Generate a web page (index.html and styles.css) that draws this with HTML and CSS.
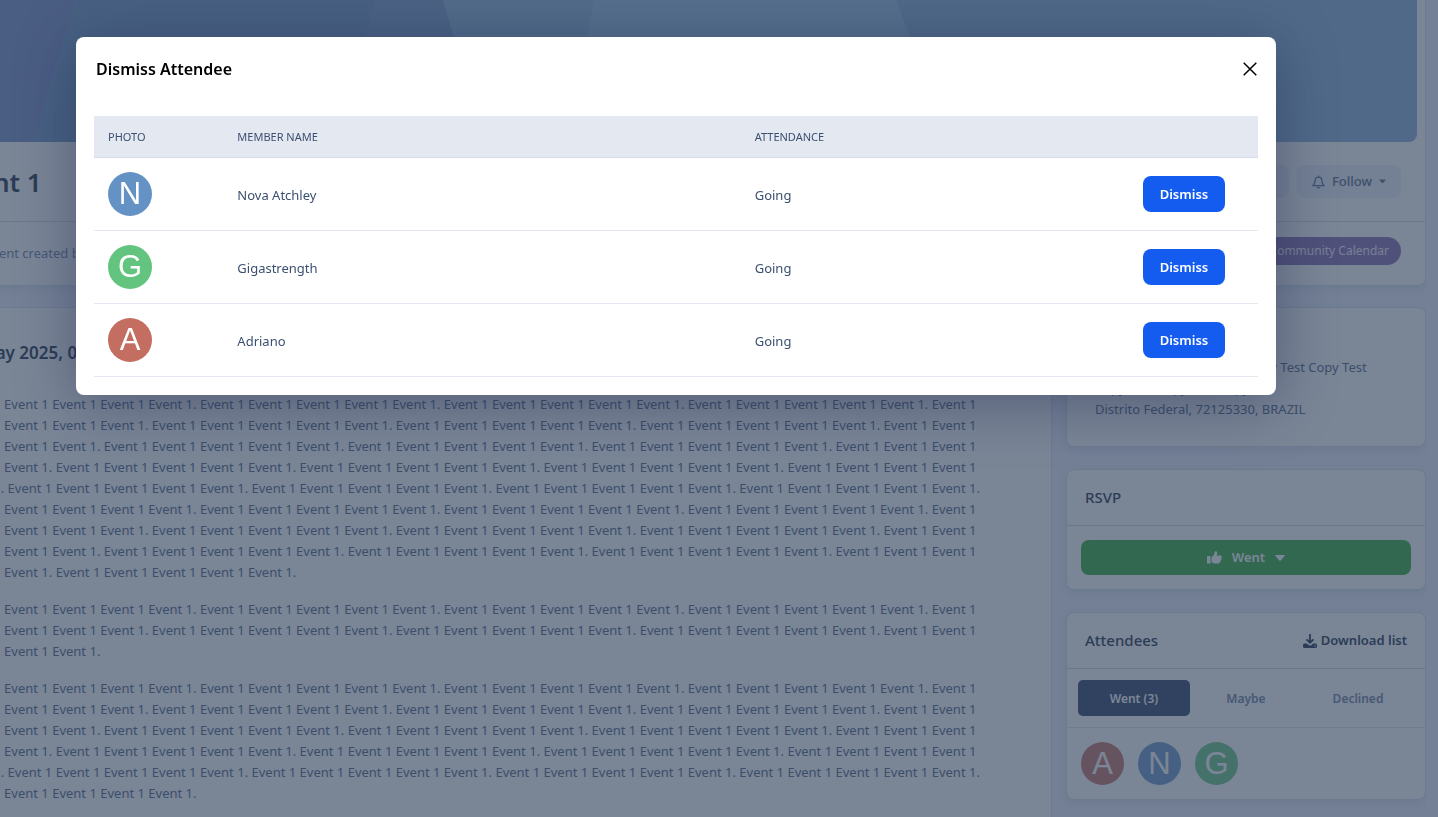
FILE: index.html
```html
<!DOCTYPE html>
<html lang="en">
<head>
<meta charset="utf-8">
<title>Event 1</title>
<link rel="stylesheet" href="styles.css">
</head>
<body>
<div class="page">
  <header class="hero">
    <div class="banner">
      <svg class="banner-art" viewBox="0 0 1474 142" preserveAspectRatio="none" aria-hidden="true">
        <path d="M0 0H133L91 142H0Z" fill="#889bcf"/>
        <path d="M133 0H432L396 142H91Z" fill="#82a5cd"/>
        <path d="M432 0H500L542 142H396Z" fill="#8ba9d2"/>
        <path d="M500 0H651L623 142H542Z" fill="#9bc0df"/>
        <path d="M651 0H953L1007 142H623Z" fill="#a4cae7"/>
      </svg>
    </div>
    <div class="hero-title">
      <h1>Event 1</h1>
      <div class="hero-actions">
        <button class="soft-btn" type="button">Share</button>
        <button class="soft-btn" type="button">
          <svg width="13" height="14" viewBox="0 0 14 15" fill="none" stroke="currentColor" stroke-width="1.4" aria-hidden="true"><path d="M7 .5V2.200M7 2.200C4.500 2.200 3.300 4 3.300 6.200C3.300 9 2.600 9.800 1.200 11.500H12.800C11.400 9.800 10.700 9 10.700 6.200C10.700 4 9.500 2.200 7 2.200ZM5.500 13C5.800 14.200 8.200 14.200 8.500 13"/></svg>
          Follow
          <svg width="7" height="5" viewBox="0 0 8 5" aria-hidden="true"><path d="M.8.3H7.200Q8 .4 7.400 1L4.500 4.300Q4 4.800 3.500 4.300L.6 1Q0 .4.8.3Z" fill="currentColor"/></svg>
        </button>
      </div>
    </div>
    <div class="hero-meta">
      <span>This event created by Gigastrength</span>
      <a class="pill" href="#">Add to Community Calendar</a>
    </div>
  </header>

  <div class="columns">
    <main class="details">
      <h2>12 May 2025, 09:00</h2>
      <p>Event 1 Event 1 Event 1 Event 1 Event 1. Event 1 Event 1 Event 1 Event 1 Event 1. Event 1 Event 1 Event 1 Event 1 Event 1. Event 1 Event 1 Event 1 Event 1 Event 1. Event 1 Event 1 Event 1 Event 1 Event 1. Event 1 Event 1 Event 1 Event 1 Event 1. Event 1 Event 1 Event 1 Event 1 Event 1. Event 1 Event 1 Event 1 Event 1 Event 1. Event 1 Event 1 Event 1 Event 1 Event 1. Event 1 Event 1 Event 1 Event 1 Event 1. Event 1 Event 1 Event 1 Event 1 Event 1. Event 1 Event 1 Event 1 Event 1 Event 1. Event 1 Event 1 Event 1 Event 1 Event 1. Event 1 Event 1 Event 1 Event 1 Event 1. Event 1 Event 1 Event 1 Event 1 Event 1. Event 1 Event 1 Event 1 Event 1 Event 1. Event 1 Event 1 Event 1 Event 1 Event 1. Event 1 Event 1 Event 1 Event 1 Event 1. Event 1 Event 1 Event 1 Event 1 Event 1. Event 1 Event 1 Event 1 Event 1 Event 1. Event 1 Event 1 Event 1 Event 1 Event 1. Event 1 Event 1 Event 1 Event 1 Event 1. Event 1 Event 1 Event 1 Event 1 Event 1. Event 1 Event 1 Event 1 Event 1 Event 1. Event 1 Event 1 Event 1 Event 1 Event 1. Event 1 Event 1 Event 1 Event 1 Event 1. Event 1 Event 1 Event 1 Event 1 Event 1. Event 1 Event 1 Event 1 Event 1 Event 1. Event 1 Event 1 Event 1 Event 1 Event 1. Event 1 Event 1 Event 1 Event 1 Event 1. Event 1 Event 1 Event 1 Event 1 Event 1. Event 1 Event 1 Event 1 Event 1 Event 1. Event 1 Event 1 Event 1 Event 1 Event 1. Event 1 Event 1 Event 1 Event 1 Event 1. Event 1 Event 1 Event 1 Event 1 Event 1.</p>
      <p>Event 1 Event 1 Event 1 Event 1 Event 1. Event 1 Event 1 Event 1 Event 1 Event 1. Event 1 Event 1 Event 1 Event 1 Event 1. Event 1 Event 1 Event 1 Event 1 Event 1. Event 1 Event 1 Event 1 Event 1 Event 1. Event 1 Event 1 Event 1 Event 1 Event 1. Event 1 Event 1 Event 1 Event 1 Event 1. Event 1 Event 1 Event 1 Event 1 Event 1. Event 1 Event 1 Event 1 Event 1 Event 1.</p>
      <p>Event 1 Event 1 Event 1 Event 1 Event 1. Event 1 Event 1 Event 1 Event 1 Event 1. Event 1 Event 1 Event 1 Event 1 Event 1. Event 1 Event 1 Event 1 Event 1 Event 1. Event 1 Event 1 Event 1 Event 1 Event 1. Event 1 Event 1 Event 1 Event 1 Event 1. Event 1 Event 1 Event 1 Event 1 Event 1. Event 1 Event 1 Event 1 Event 1 Event 1. Event 1 Event 1 Event 1 Event 1 Event 1. Event 1 Event 1 Event 1 Event 1 Event 1. Event 1 Event 1 Event 1 Event 1 Event 1. Event 1 Event 1 Event 1 Event 1 Event 1. Event 1 Event 1 Event 1 Event 1 Event 1. Event 1 Event 1 Event 1 Event 1 Event 1. Event 1 Event 1 Event 1 Event 1 Event 1. Event 1 Event 1 Event 1 Event 1 Event 1. Event 1 Event 1 Event 1 Event 1 Event 1. Event 1 Event 1 Event 1 Event 1 Event 1. Event 1 Event 1 Event 1 Event 1 Event 1. Event 1 Event 1 Event 1 Event 1 Event 1. Event 1 Event 1 Event 1 Event 1 Event 1. Event 1 Event 1 Event 1 Event 1 Event 1.</p>
    </main>

    <aside class="sidebar">
      <section class="card place">
        <h3>Location</h3>
        <address>Test Copy Test Copy Test Copy Test Copy Test<br>Copy Test Copy Test Copy<br>Distrito Federal, 72125330, BRAZIL</address>
      </section>
      <section class="card">
        <div class="card-head"><h3>RSVP</h3></div>
        <div class="rsvp">
          <button class="went-btn" type="button">
            <svg width="15" height="13" viewBox="0 0 15 13" fill="currentColor" aria-hidden="true"><path d="M.5 5H3Q3.500 5 3.500 5.500V12Q3.500 12.500 3 12.500H.5Q0 12.500 0 12V5.500Q0 5 .5 5ZM4.500 6C6.500 5 7.200 3.500 7.500 1.500C7.800-.4 10.500-.2 10.200 2.200C10.100 3.100 9.900 3.800 9.500 4.500H13.500C15 4.500 15.400 6.300 14.200 6.900C15 7.800 14.600 9 13.700 9.200C14 10.200 13.500 10.900 12.700 11C12.800 12 12.200 12.500 11.300 12.500H8.200C6.600 12.500 5.800 11.400 4.500 11.200Z"/></svg>
            Went
            <svg width="10" height="6" viewBox="0 0 10 6" fill="currentColor" aria-hidden="true"><path d="M1 0H9Q10.300.1 9.500 1L5.700 5.500Q5 6.200 4.300 5.500L.5 1Q-.3.1 1 0Z"/></svg>
          </button>
        </div>
      </section>
      <section class="card">
        <div class="card-head">
          <h3>Attendees</h3>
          <a class="download" href="#">
            <svg width="14" height="14" viewBox="0 0 14 14" aria-hidden="true"><path d="M7 0V8M3.500 5.300L7 8.700L10.500 5.300" fill="none" stroke="currentColor" stroke-width="1.800"/><path d="M1.500 9.500H3.800L5.500 10.900Q7 12 8.500 10.900L10.200 9.500H12.500Q14 9.500 14 11V12.500Q14 14 12.500 14H1.500Q0 14 0 12.500V11Q0 9.500 1.500 9.500ZM11.400 11.200V12.400H12.600V11.200Z" fill="currentColor" fill-rule="evenodd"/></svg>
            Download list
          </a>
        </div>
        <div class="tabs">
          <button class="tab tab-on" type="button">Went (3)</button>
          <button class="tab" type="button">Maybe</button>
          <button class="tab" type="button">Declined</button>
        </div>
        <div class="faces">
          <span class="avatar red">A</span>
          <span class="avatar blue">N</span>
          <span class="avatar green">G</span>
        </div>
      </section>
    </aside>
  </div>
</div>

<div class="backdrop">
  <div class="modal" role="dialog" aria-modal="true" aria-labelledby="modal-title">
    <div class="modal-head">
      <h2 id="modal-title">Dismiss Attendee</h2>
      <button class="close" type="button" aria-label="Close">
        <svg width="14" height="14" viewBox="0 0 14 14" stroke="#000" stroke-width="1.500" aria-hidden="true"><path d="M.7.7L13.300 13.300M13.300.7L.7 13.300"/></svg>
      </button>
    </div>
    <table class="members">
      <colgroup><col class="c1"><col class="c4"><col class="c3"><col class="c1"></colgroup>
      <thead><tr><th>PHOTO</th><th>MEMBER NAME</th><th>ATTENDANCE</th><td></td></tr></thead>
      <tbody>
        <tr><td><span class="avatar blue">N</span></td><td class="text">Nova Atchley</td><td class="text">Going</td><td><button class="dismiss" type="button">Dismiss</button></td></tr>
        <tr><td><span class="avatar green">G</span></td><td class="text">Gigastrength</td><td class="text">Going</td><td><button class="dismiss" type="button">Dismiss</button></td></tr>
        <tr><td><span class="avatar red">A</span></td><td class="text">Adriano</td><td class="text">Going</td><td><button class="dismiss" type="button">Dismiss</button></td></tr>
      </tbody>
    </table>
  </div>
</div>
</body>
</html>
```
FILE: styles.css
```css
* { box-sizing: border-box; }
html, body { height: 100%; }
body {
  margin: 0;
  overflow: hidden;
  background: #edf2fc;
  color: #3b5070;
  font: 13px/21px "Segoe UI", "Noto Sans", "Open Sans", sans-serif;
}
h1, h2, h3, p { margin: 0; }
h1, h2, h3 { font-weight: 600; color: #3d4a60; }
button { font: inherit; border: 0; cursor: pointer; }
a { text-decoration: none; }

/* The event page is scrolled sideways, its left edge out of view */
.page {
  height: 100%;
  margin: 0 12px 0 -66px;
  overflow: hidden;
  color: #667792;
}
.hero {
  background: #fff;
  border: 1px solid #dce2ec;
  border-top: 0;
  border-radius: 0 0 8px 8px;
  box-shadow: 0 3px 8px rgba(40, 60, 100, .08);
}
.banner {
  height: 142px;
  margin: 0 8px;
  border-radius: 0 0 8px 8px;
  overflow: hidden;
  background: #97badc;
}
.banner-art { display: block; width: 100%; height: 100%; }
.hero-title, .hero-meta {
  display: flex;
  align-items: center;
  justify-content: space-between;
  padding: 0 24px 0 14px;
}
.hero-title { height: 80px; border-bottom: 1px solid #d8dfea; }
.hero-title h1 { font-size: 26px; line-height: 32px; }
.hero-actions { display: flex; gap: 8px; }
.soft-btn {
  display: flex;
  align-items: center;
  gap: 7px;
  height: 33px;
  padding: 0 15px;
  border-radius: 8px;
  background: #eff3f9;
  color: #6a7a94;
  font-weight: 500;
}
.hero-meta { height: 63px; padding-left: 22px; color: #7f90ad; }
.pill {
  margin-bottom: 6px;
  padding: 0 12px;
  border-radius: 14px;
  background: #967db8;
  color: #f4f0fa;
  font-size: 12px;
  line-height: 28px;
}
.columns {
  display: grid;
  grid-template-columns: minmax(0, 1fr) 360px;
  gap: 14px;
  margin-top: 21px;
}
.details {
  min-height: 560px;
  padding: 34px 12px 40px 21px;
  background: #fff;
  border: 1px solid #dce2ec;
}
.details h2 { margin-bottom: 31px; font-size: 17px; line-height: 21px; }
.details p { margin-bottom: 16px; padding-right: 42px; }
.sidebar { display: flex; flex-direction: column; gap: 22px; }
.card {
  background: #fff;
  border: 1px solid #dce2ec;
  border-radius: 8px;
  box-shadow: 0 3px 8px rgba(40, 60, 100, .08);
}
.place { padding: 18px 28px 26px; }
.place h3 { margin-bottom: 10px; }
.place address { font-style: normal; }
.card-head {
  display: flex;
  align-items: center;
  justify-content: space-between;
  height: 56px;
  padding: 0 18px;
  border-bottom: 1px solid #d8dfea;
}
.card-head h3 { font-size: 15px; font-weight: 500; }
.rsvp { padding: 14px; }
.went-btn {
  display: flex;
  align-items: center;
  justify-content: center;
  gap: 10px;
  width: 100%;
  height: 35px;
  border-radius: 8px;
  background: #4cb652;
  color: #fff;
  font-weight: 600;
}
.download { display: flex; align-items: center; gap: 4px; color: #3d4a60; font-weight: 600; }
.tabs {
  display: grid;
  grid-template-columns: repeat(3, 1fr);
  padding: 11px;
  border-bottom: 1px solid #e4e9f2;
}
.tab {
  height: 36px;
  border-radius: 5px;
  background: transparent;
  color: #7f90ad;
  font-size: 12px;
  font-weight: 600;
}
.tab-on { background: #4a5878; color: #fff; }
.faces { display: flex; gap: 14px; padding: 14px; }
.avatar {
  display: flex;
  align-items: center;
  justify-content: center;
  width: 44px;
  height: 44px;
  border-radius: 50%;
  color: #fff;
  font: 31px/44px "Liberation Sans", Arial, sans-serif;
}
.red { background: #c46e62; }
.blue { background: #6492c5; }
.green { background: #62c47e; }
.faces .avatar { width: 43px; height: 43px; opacity: .85; }

.backdrop {
  position: fixed;
  inset: 0;
  padding: 37px 162px 0 76px;
  background: rgba(33, 51, 80, .6);
}
.modal {
  padding: 18px;
  border-radius: 8px;
  background: #fff;
  box-shadow: 0 8px 60px rgba(20, 30, 70, .4);
}
.modal-head {
  display: flex;
  align-items: flex-start;
  justify-content: space-between;
  height: 61px;
  padding: 3px 0 0 2px;
}
.modal-head h2 { color: #000; font-size: 16px; line-height: 22px; }
.close { display: flex; padding: 4px 1px; background: none; }
.members { width: 100%; border-collapse: collapse; table-layout: fixed; }
.c1 { width: 11.11%; }
.c4 { width: 44.44%; }
.c3 { width: 33.33%; }
.members th, .members td { padding: 0 14px; text-align: left; }
.members .text { padding-top: 3px; }
.members thead tr { height: 41px; background: #e4e8f1; border-bottom: 1px solid #d5dbe8; }
.members th { font-size: 11px; font-weight: 400; }
.members tbody tr { height: 73px; border-bottom: 1px solid #e4e8f1; }
.dismiss {
  display: block;
  height: 36px;
  padding: 2px 17px 0;
  border-radius: 8px;
  background: #145bf0;
  color: #fff;
  font-weight: 600;
}
```
